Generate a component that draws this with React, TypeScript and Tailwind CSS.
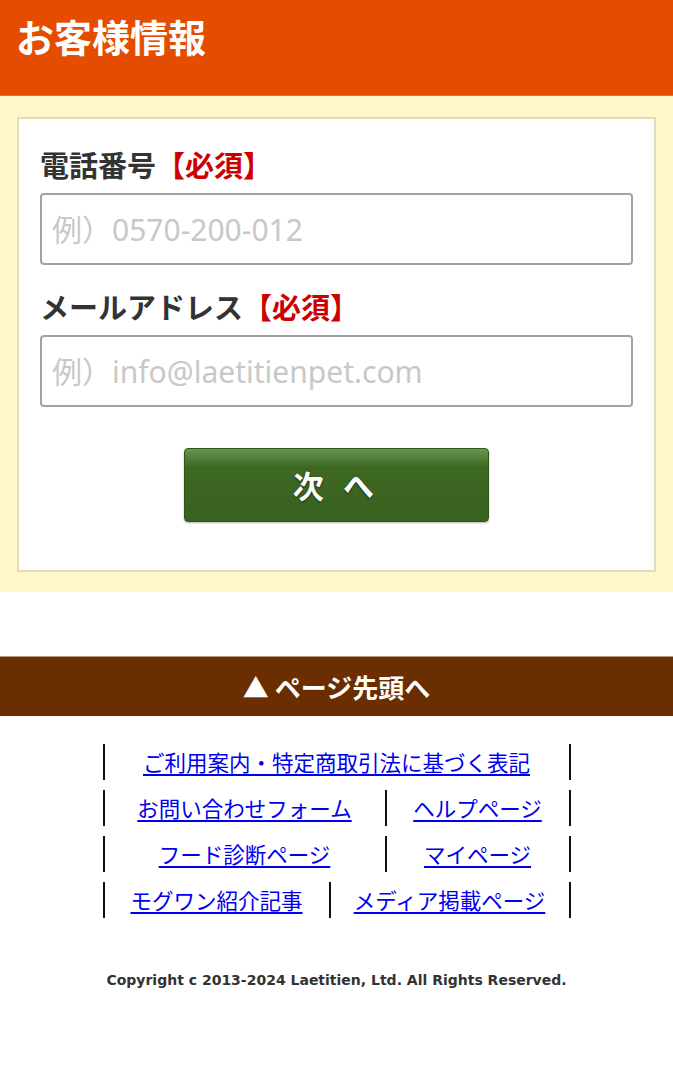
import React from "react";

const jp = { fontFamily: '"Noto Sans CJK JP", "Noto Sans", sans-serif' };
const ph = { fontFamily: '"Noto Sans", "Noto Sans CJK JP", sans-serif' };

const links = [
  ["ご利用案内・特定商取引法に基づく表記"],
  ["お問い合わせフォーム", "ヘルプページ"],
  ["フード診断ページ", "マイページ"],
  ["モグワン紹介記事", "メディア掲載ページ"],
];

function Field({ label, placeholder }: { label: string; placeholder: string }) {
  return (
    <div className="mb-[23px]">
      <label className="block text-[29px] font-bold leading-[36px] text-[#333]">
        {label}
        <span className="text-[#cc0000]">【必須】</span>
      </label>
      <input
        type="text"
        placeholder={placeholder}
        className="mt-[11px] block h-[72px] w-full rounded-[4px] border-2 border-[#a3a3a3] bg-white px-[10px] text-[30px] text-[#333] outline-none placeholder:text-[#c8c8c8]"
        style={ph}
      />
    </div>
  );
}

export default function App() {
  return (
    <div className="min-h-[1066px] w-[673px] bg-white" style={jp}>
      <header className="h-[96px] border-b border-[#f06a2a] bg-[#e44d00] px-[16px] pt-[11px]">
        <h1 className="text-[38px] font-bold leading-[50px] text-white">お客様情報</h1>
      </header>

      <section className="bg-[#fff7ca] px-[17px] pt-[21px] pb-[20px]">
        <div className="border-2 border-[#e1dbbf] bg-white px-[21px] pt-[27px] pb-[48px]">
          <Field label="電話番号" placeholder="例）0570-200-012" />
          <Field label="メールアドレス" placeholder="例）info@laetitienpet.com" />
          <div className="flex justify-center pt-[18px]">
            <button className="h-[74px] w-[305px] rounded-[4px] border border-[#2f5418] bg-gradient-to-b from-[#6a9651] from-0% via-[#3d6822] via-25% to-[#38611f] text-[31px] font-bold tracking-[0.2em] text-white [text-shadow:0_1px_2px_rgba(0,0,0,0.6)] shadow-[0_1px_2px_rgba(0,0,0,0.3)]">
              次 へ
            </button>
          </div>
        </div>
      </section>

      <div className="h-[64px]" />

      <div className="flex h-[60px] items-center justify-center border-t border-[#b89a80] bg-[#6b2e00] text-[26px] font-bold text-white">
        ▲ ページ先頭へ
      </div>

      <nav className="mx-auto mt-[28px] w-[468px]">
        {links.map((row, i) => (
          <div key={i} className="mb-[10px] flex h-[36px] items-stretch border-x-2 border-[#111]">
            {row.map((t, j) => (
              <div
                key={t}
                className={`flex items-center justify-center ${
                  row.length === 1
                    ? "flex-1"
                    : i === 3
                      ? j === 0
                        ? "w-[226px] border-r-2 border-[#111]"
                        : "flex-1"
                      : j === 0
                        ? "w-[282px] border-r-2 border-[#111]"
                        : "flex-1"
                }`}
              >
                <a href="#" className="text-[21.5px] leading-none text-[#0000ee] underline underline-offset-[3px]">
                  {t}
                </a>
              </div>
            ))}
          </div>
        ))}
      </nav>

      <p
        className="mt-[52px] text-center text-[14px] font-bold text-[#333]"
        style={{ fontFamily: '"DejaVu Sans", Verdana, sans-serif' }}
      >
        Copyright c 2013-2024 Laetitien, Ltd. All Rights Reserved.
      </p>
    </div>
  );
}
